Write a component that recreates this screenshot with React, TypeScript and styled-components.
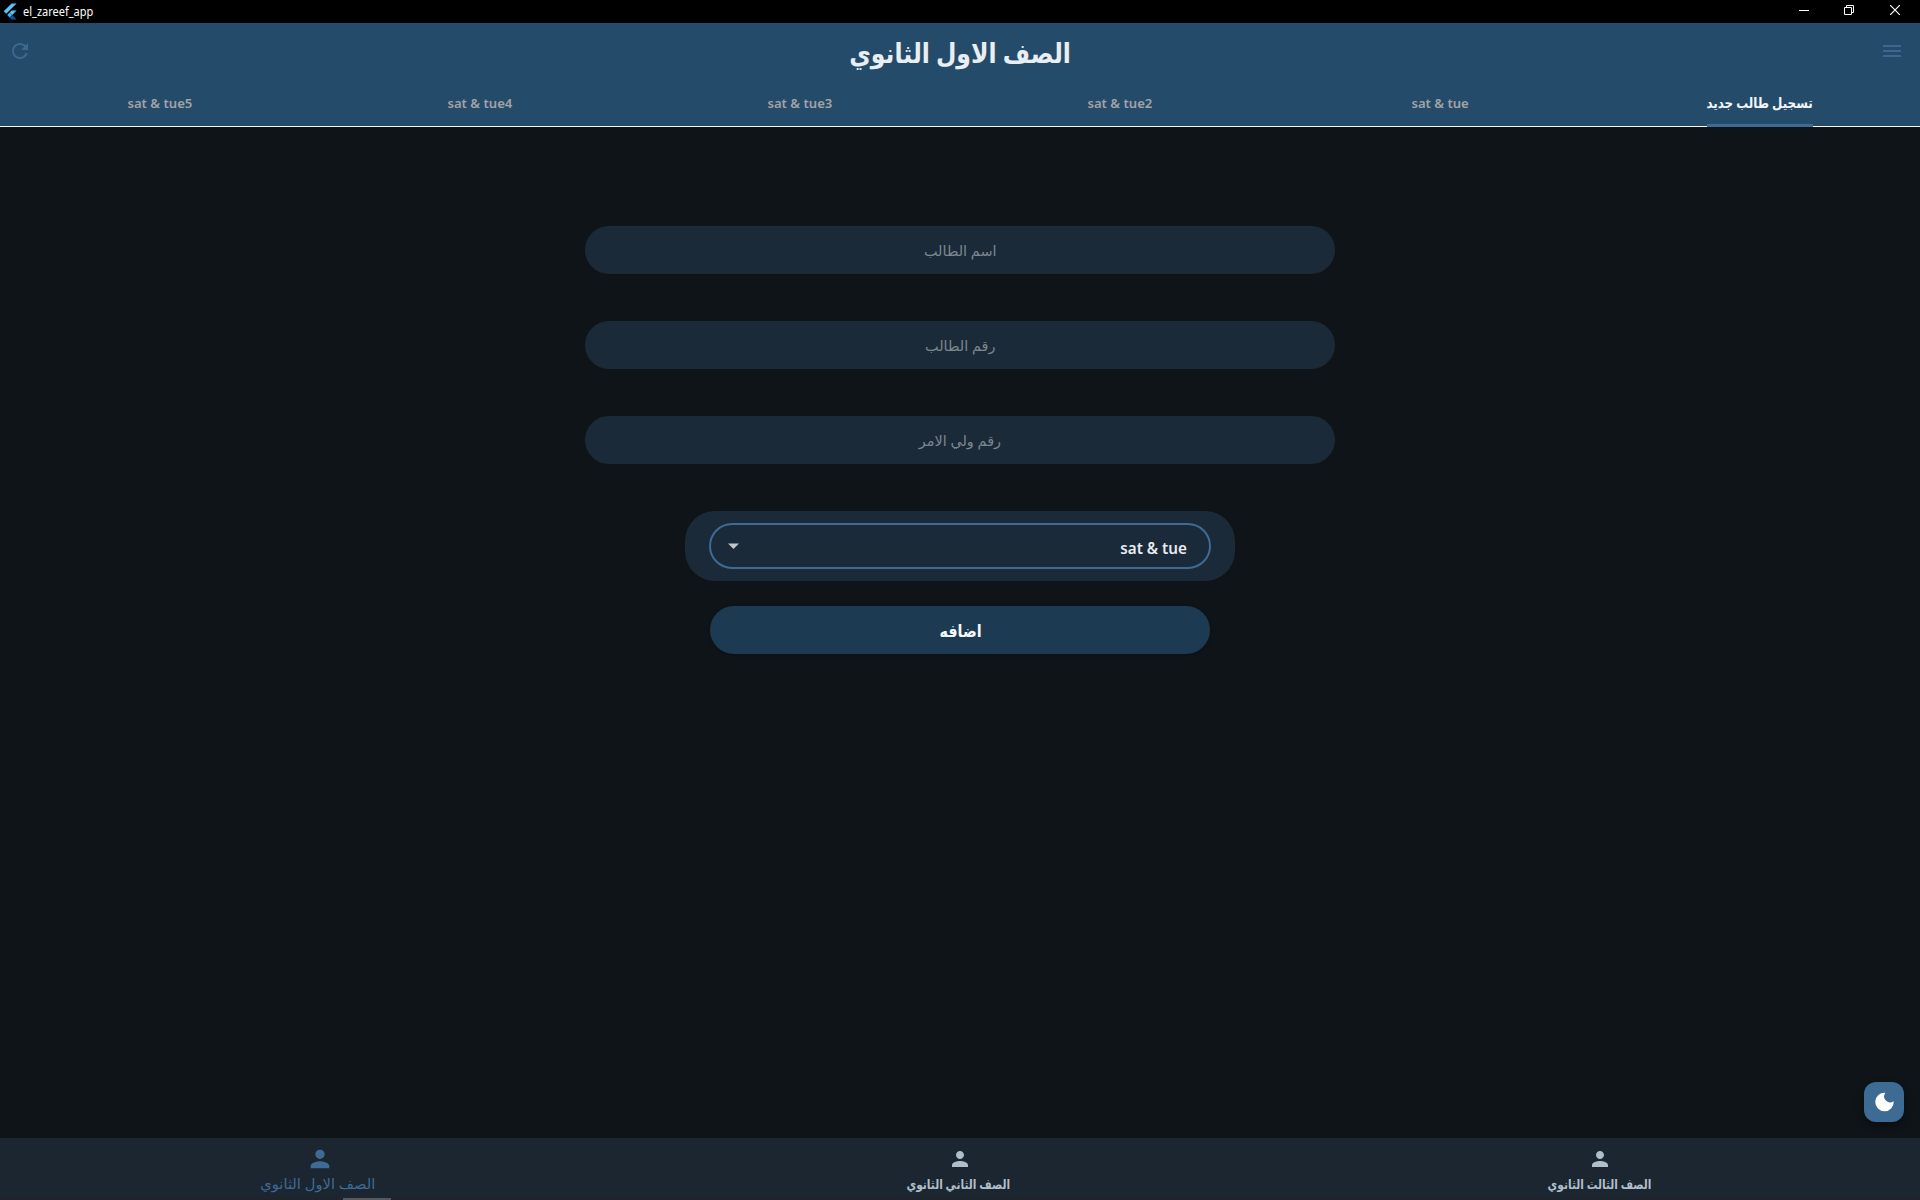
import React from "react";
import styled, { createGlobalStyle } from "styled-components";

const GlobalStyle = createGlobalStyle`
  * { box-sizing: border-box; }
  body { margin: 0; background: #0f1418; }
`;

const FONT = `"Noto Sans", "DejaVu Sans", sans-serif`;

const Screen = styled.div`
  width: 1920px;
  height: 1200px;
  display: flex;
  flex-direction: column;
  overflow: hidden;
  position: relative;
  background: #0f1418;
  font-family: ${FONT};
`;

const TitleBar = styled.div`
  height: 23px;
  background: #000;
  display: flex;
  justify-content: space-between;
  color: #fff;
  flex: none;
`;

const AppName = styled.div`
  display: flex;
  align-items: center;
  gap: 6px;
  padding-left: 3px;
  font-size: 12px;
  line-height: 22px;
`;

const Caption = styled.span`
  display: block;
  transform-origin: left center;
  transform: scaleX(0.915);
`;

const WindowControls = styled.div`
  display: flex;
  padding-right: 2px;
`;

const WindowControl = styled.div<{ $width?: number }>`
  width: ${(p) => p.$width ?? 46}px;
  height: 20px;
  display: flex;
  align-items: center;
  justify-content: center;
`;

const Header = styled.header`
  height: 104px;
  flex: none;
  background: #244c6a;
  display: flex;
  flex-direction: column;
`;

const Toolbar = styled.div`
  height: 56px;
  display: flex;
  align-items: center;
  justify-content: space-between;
  padding: 0 16px 0 8px;
  color: #3c6890;
`;

const Text = styled.span<{
  $size: number;
  $sx?: number;
  $dx?: number;
  $dy?: number;
  $weight?: number;
  $color: string;
}>`
  display: inline-block;
  white-space: nowrap;
  font-size: ${(p) => p.$size}px;
  font-weight: ${(p) => p.$weight ?? 400};
  color: ${(p) => p.$color};
  line-height: 1.3;
  transform: translate(${(p) => p.$dx ?? 0}px, ${(p) => p.$dy ?? 0}px) scaleX(${(p) => p.$sx ?? 1});
`;

const PageTitle = styled(Text)`
  margin-left: 8px;
`;

const SelectValue = styled(Text)`
  transform-origin: right center;
`;

const TabBar = styled.nav`
  height: 48px;
  display: flex;
  border-bottom: 1px solid #f4f6f8;
`;

const Tab = styled.div`
  width: 320px;
  height: 48px;
  display: flex;
  justify-content: center;
`;

const TabLabel = styled.div<{ $active?: boolean }>`
  width: ${(p) => (p.$active ? "106px" : "auto")};
  height: 48px;
  display: flex;
  align-items: center;
  justify-content: center;
  border-bottom: 3px solid ${(p) => (p.$active ? "#3e6b93" : "transparent")};
`;

const Main = styled.main`
  flex: 1;
  display: flex;
  flex-direction: column;
  align-items: center;
  padding-top: 99px;
`;

const Field = styled.div`
  width: 750px;
  height: 48px;
  border-radius: 24px;
  margin-bottom: 47px;
  background: #1b2a38;
  display: flex;
  align-items: center;
  justify-content: center;
`;

const SelectCard = styled.div`
  width: 550px;
  height: 70px;
  border-radius: 30px;
  background: #1b2a38;
  display: flex;
  align-items: center;
  justify-content: center;
`;

const SelectBox = styled.div`
  width: 502px;
  height: 46px;
  border: 2px solid #3e6b94;
  border-radius: 23px;
  display: flex;
  align-items: center;
  justify-content: space-between;
  padding: 0 22px 0 17px;
`;

const Submit = styled.div`
  width: 500px;
  height: 48px;
  margin-top: 25px;
  border-radius: 24px;
  background: #1c3b52;
  box-shadow: 0 1px 3px rgba(0, 0, 0, 0.2);
  display: flex;
  align-items: center;
  justify-content: center;
`;

const BottomNav = styled.nav`
  height: 62px;
  flex: none;
  background: #1b2631;
  display: flex;
`;

const NavItem = styled.div<{ $active?: boolean }>`
  width: 640px;
  display: flex;
  flex-direction: column;
  align-items: center;
  padding-top: ${(p) => (p.$active ? 7 : 9)}px;
  color: ${(p) => (p.$active ? "#3e6b94" : "#b0bec9")};
`;

const Fab = styled.div`
  position: absolute;
  left: 1864px;
  top: 1082px;
  width: 40px;
  height: 40px;
  border-radius: 12px;
  background: #3e6b94;
  box-shadow: 0 4px 8px rgba(0, 0, 0, 0.35);
  display: flex;
  align-items: center;
  justify-content: center;
`;

const TaskbarEdge = styled.div`
  position: absolute;
  left: 0;
  right: 0;
  bottom: 0;
  height: 2px;
  background: #20242a;
  padding-left: 343px;
`;

const TaskbarMark = styled.div`
  width: 48px;
  height: 2px;
  background: #55585d;
`;

const Person = ({ size }: { size: number }) => (
  <svg width={size} height={size} viewBox="0 0 24 24" fill="currentColor">
    <path d="M12 12c2.21 0 4-1.79 4-4s-1.79-4-4-4-4 1.79-4 4 1.79 4 4 4zm0 2c-2.67 0-8 1.34-8 4v2h16v-2c0-2.66-5.33-4-8-4z" />
  </svg>
);

const tabs = ["sat & tue5", "sat & tue4", "sat & tue3", "sat & tue2", "sat & tue"];
const fields = ["اسم الطالب", "رقم الطالب", "رقم ولي الامر"];

export default function App() {
  return (
    <>
      <GlobalStyle />
      <Screen>
        <TitleBar>
          <AppName>
            <svg width="14" height="17" viewBox="0 0 14 17">
              <path d="M8.6 0.5H13.6L3.2 10.8L0.7 8.3Z" fill="#55c4f5" />
              <path d="M8.6 7.6H13.6L9.2 12L6.7 9.5Z" fill="#55c4f5" />
              <path d="M4.2 12L6.7 9.5L9.2 12L6.7 14.5Z" fill="#3fb4ee" />
              <path d="M6.7 14.5L9.2 12L13.6 16.5H8.7Z" fill="#0b579b" />
            </svg>
            <Caption>el_zareef_app</Caption>
          </AppName>
          <WindowControls>
            <WindowControl $width={44}>
              <svg width="10" height="10" viewBox="0 0 10 10"><path d="M0 5.5H10" stroke="#fff" /></svg>
            </WindowControl>
            <WindowControl>
              <svg width="10" height="10" viewBox="0 0 10 10" fill="none" stroke="#fff">
                <path d="M0.5 2.5H7.5V9.5H0.5ZM2.5 2.5V0.5H9.5V7.5H7.5" />
              </svg>
            </WindowControl>
            <WindowControl>
              <svg width="10" height="10" viewBox="0 0 10 10"><path d="M0 0L10 10M10 0L0 10" stroke="#fff" strokeWidth="1.2" /></svg>
            </WindowControl>
          </WindowControls>
        </TitleBar>
        <Header>
          <Toolbar>
            <svg width="24" height="24" viewBox="0 0 24 24" fill="currentColor">
              <path d="M17.65 6.35C16.2 4.9 14.21 4 12 4c-4.42 0-7.99 3.58-7.99 8s3.57 8 7.99 8c3.73 0 6.84-2.55 7.73-6h-2.08c-.82 2.33-3.04 4-5.65 4-3.31 0-6-2.69-6-6s2.69-6 6-6c1.66 0 3.14.69 4.22 1.78L13 11h7V4l-2.35 2.35z" />
            </svg>
            <PageTitle $size={27} $sx={0.872} $dy={1.5} $weight={700} $color="#e9eef3" dir="rtl">الصف الاول الثانوي</PageTitle>
            <svg width="24" height="24" viewBox="0 0 24 24" fill="currentColor">
              <path d="M3 18h18v-2H3v2zm0-5h18v-2H3v2zm0-7v2h18V6H3z" />
            </svg>
          </Toolbar>
          <TabBar>
            {tabs.map((t) => (
              <Tab key={t}>
                <TabLabel><Text $size={13.3} $sx={0.985} $dy={1.5} $weight={600} $color="#a3a3a6">{t}</Text></TabLabel>
              </Tab>
            ))}
            <Tab>
              <TabLabel $active>
                <Text $size={14} $sx={0.85} $dy={1.5} $weight={700} $color="#f3f6f8" dir="rtl">تسجيل طالب جديد</Text>
              </TabLabel>
            </Tab>
          </TabBar>
        </Header>
        <Main>
          {fields.map((f) => (
            <Field key={f}><Text $size={14} $sx={1.03} $dy={1} $color="#7b8791" dir="rtl">{f}</Text></Field>
          ))}
          <SelectCard>
            <SelectBox>
              <svg width="11" height="6" viewBox="0 0 11 6"><path d="M0 0.5H11L5.5 6Z" fill="#c0c5c9" /></svg>
              <SelectValue $size={15.5} $sx={0.98} $dy={2} $weight={600} $color="#e6ecf1">sat &amp; tue</SelectValue>
            </SelectBox>
          </SelectCard>
          <Submit><Text $size={17} $sx={0.84} $dx={0.5} $dy={1} $weight={700} $color="#f4f7f9" dir="rtl">اضافه</Text></Submit>
        </Main>
        <BottomNav>
          <NavItem $active>
            <Person size={28} />
            <Text $size={14} $sx={1.05} $dx={-2} $dy={2} $color="#3e6b94" dir="rtl">الصف الاول الثانوي</Text>
          </NavItem>
          <NavItem>
            <Person size={24} />
            <Text $size={13} $sx={0.82} $dx={-2} $dy={4.5} $weight={700} $color="#b0bec9" dir="rtl">الصف الثاني الثانوي</Text>
          </NavItem>
          <NavItem>
            <Person size={24} />
            <Text $size={13} $sx={0.817} $dy={4.5} $weight={700} $color="#b0bec9" dir="rtl">الصف الثالث الثانوي</Text>
          </NavItem>
        </BottomNav>
        <Fab>
          <svg width="20" height="20" viewBox="0 0 20 20" fill="#fff">
            <path d="M11.4 0.9A9.2 9.2 0 1 0 19.6 9.2A5.9 5.9 0 0 1 11.4 0.9Z" />
          </svg>
        </Fab>
        <TaskbarEdge><TaskbarMark /></TaskbarEdge>
      </Screen>
    </>
  );
}
